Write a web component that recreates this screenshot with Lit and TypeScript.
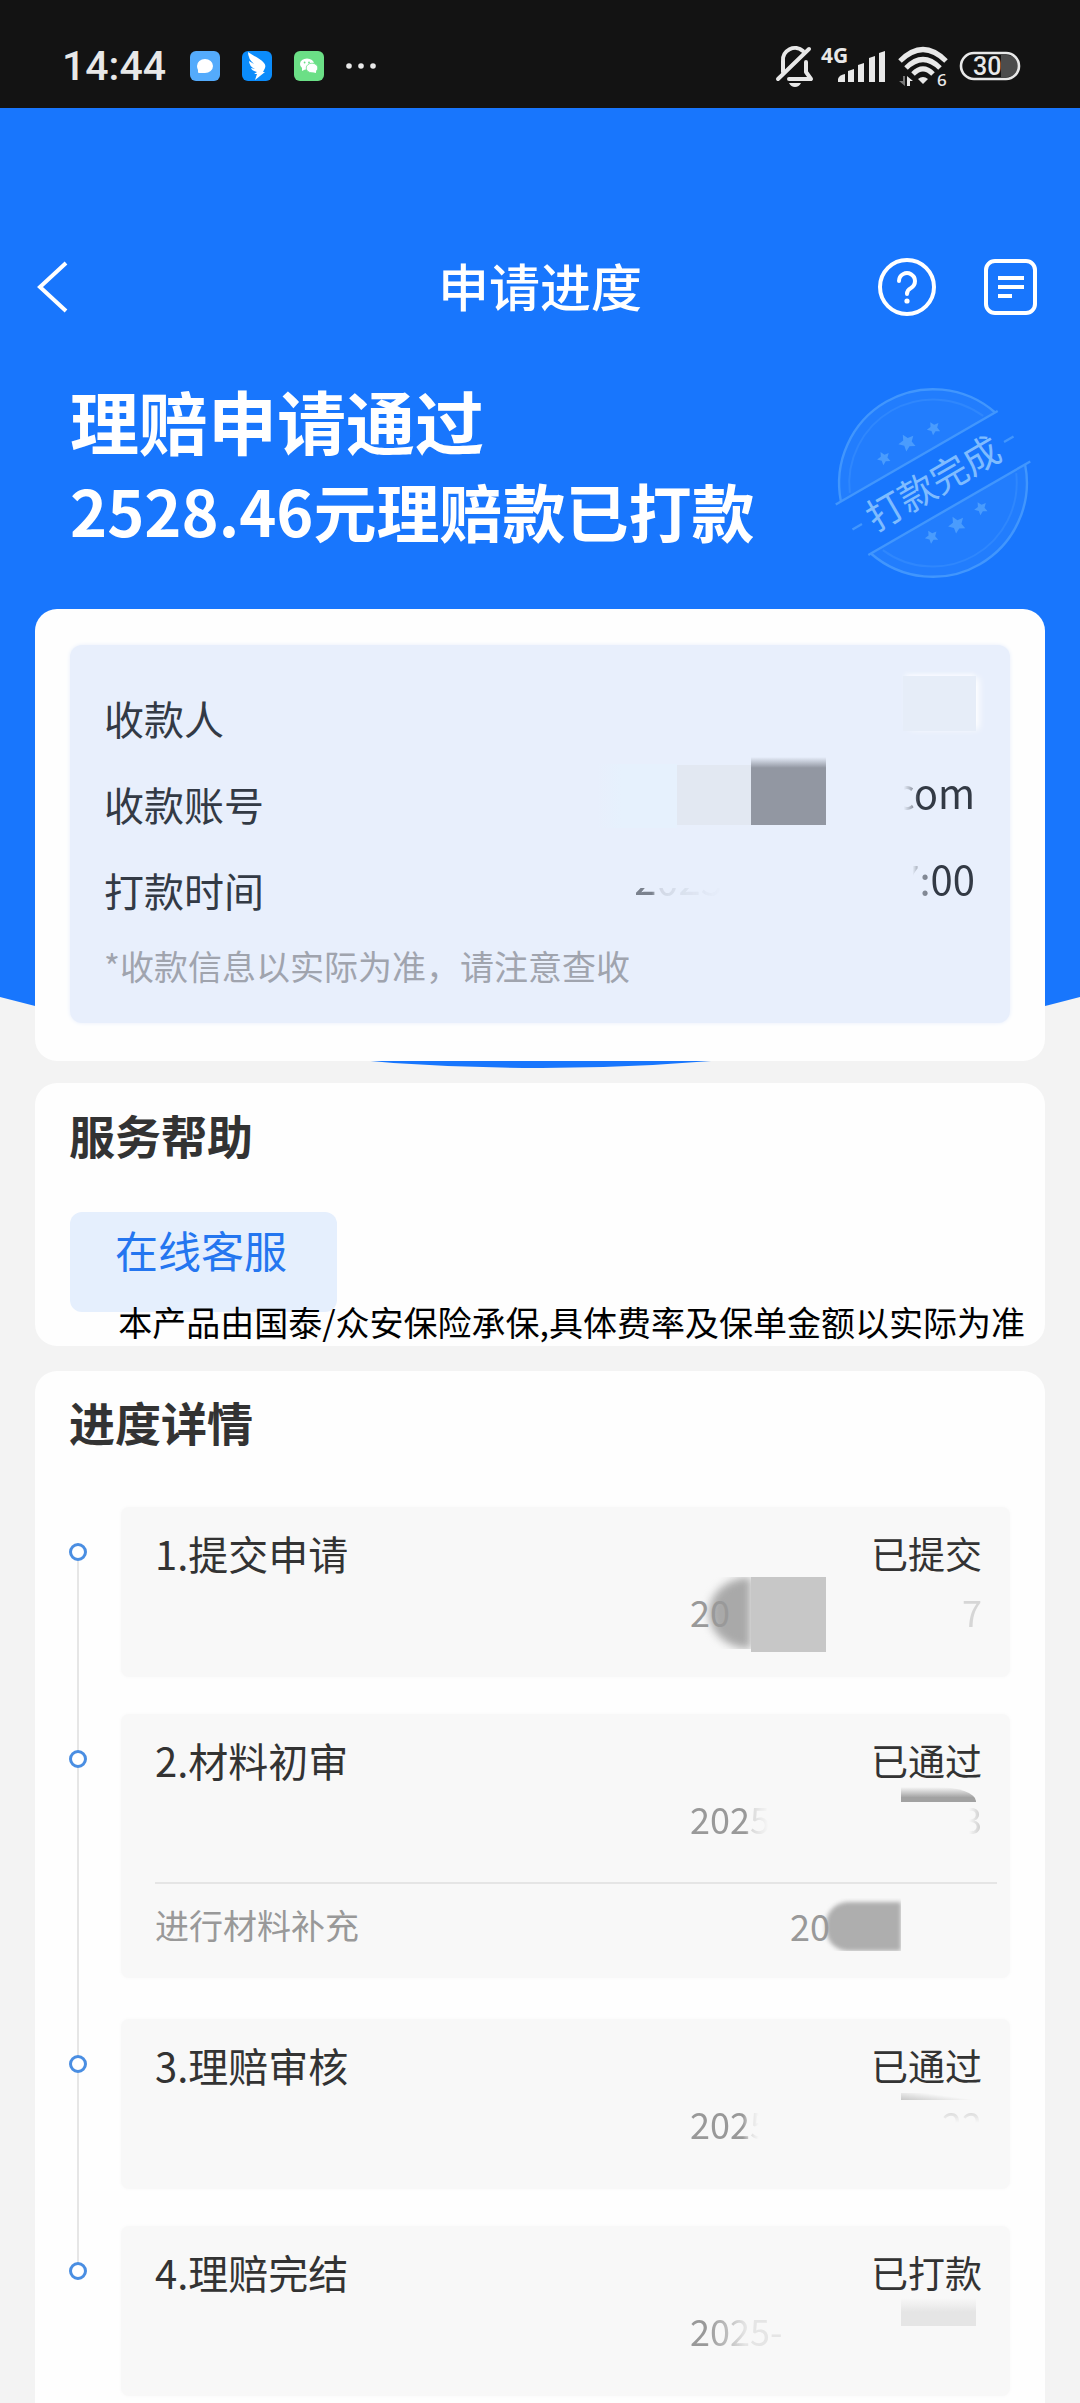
import { LitElement, html, css, svg, nothing } from "lit";
import { customElement, property } from "lit/decorators.js";

interface Step {
  title: string;
  status: string;
  head: string;
  headFade: string;
  tail: string;
  tailFade: string;
  covers: string[];
  extra?: { label: string; date: string; cover: string };
}

const STEPS: Step[] = [
  { title: "1.提交申请", status: "已提交", head: "20", headFade: "", tail: "7", tailFade: "ghost", covers: ["smear-round", "smear-flat"] },
  {
    title: "2.材料初审", status: "已通过", head: "2025", headFade: "fade-late", tail: "3", tailFade: "right-half", covers: ["strip-dark"],
    extra: { label: "进行材料补充", date: "20", cover: "smear-pill" },
  },
  { title: "3.理赔审核", status: "已通过", head: "2025", headFade: "fade-mid", tail: "22", tailFade: "top-part", covers: ["strip-thin"] },
  { title: "4.理赔完结", status: "已打款", head: "2025-", headFade: "fade-early", tail: "", tailFade: "", covers: ["strip-pale"] },
];

const star = (x: number, y: number, r: number) => {
  const pts: string[] = [];
  for (let i = 0; i < 10; i++) {
    const a = (Math.PI / 5) * i - Math.PI / 2;
    const q = i % 2 ? r * 0.5 : r;
    pts.push(`${(x + q * Math.cos(a)).toFixed(1)},${(y + q * Math.sin(a)).toFixed(1)}`);
  }
  return svg`<polygon points=${pts.join(" ")}></polygon>`;
};

@customElement("status-bar")
export class StatusBar extends LitElement {
  static styles = css`
    :host { display: block; }
    .bar {
      height: 108px; box-sizing: border-box; padding: 24px 59px 0 62px;
      display: flex; align-items: center; justify-content: space-between;
      background: #131313; color: #e8e8e8;
      font-family: Roboto, "Noto Sans CJK SC", sans-serif;
    }
    .side { display: flex; align-items: center; }
    .clock { font-size: 41px; font-weight: 500; line-height: 48px; margin-right: 24px; }
    .apps { display: flex; gap: 22px; margin-right: 20px; }
    .app { width: 30px; height: 30px; }
    .dots { width: 34px; height: 30px; }
    .bell { width: 40px; height: 44px; margin-right: 6px; }
    .cell { width: 66px; height: 44px; margin-right: 10px; }
    .wifi { width: 52px; height: 44px; margin-right: 10px; }
    .battery { width: 62px; height: 44px; }
    svg { display: block; overflow: visible; }
  `;
  render() {
    return html`
      <div class="bar">
        <div class="side">
          <span class="clock">14:44</span>
          <div class="apps">
            <svg class="app" viewBox="0 0 30 30" aria-hidden="true">
              <rect width="30" height="30" rx="6" fill="#54abfc"></rect>
              <path d="M7 15a8 7 0 1 1 8 7H9q-1 0-1-1v-2q-1-2-1-4z" fill="#fff"></path>
            </svg>
            <svg class="app" viewBox="0 0 30 30" aria-hidden="true">
              <rect width="30" height="30" rx="6" fill="#0b8cfb"></rect>
              <path d="M6 1C11 5 18 7 22 12q2 2 1 5l-2 4h2L13 29l2-6h-3l3-2q-5-1-6-4l4 1Q7 15 7 10l5 3Q6 8 6 1z" fill="#fff"></path>
            </svg>
            <svg class="app" viewBox="0 0 30 30" aria-hidden="true">
              <rect width="30" height="30" rx="6" fill="#6bdf86"></rect>
              <ellipse cx="13" cy="13" rx="7" ry="5.6" fill="#fff"></ellipse>
              <path d="M8 16l0 4 4-2z" fill="#fff"></path>
              <ellipse cx="18" cy="17" rx="5.8" ry="4.8" fill="#fff" stroke="#6bdf86" stroke-width="0.8"></ellipse>
              <path d="M22 19v3l-4-1z" fill="#fff"></path>
              <circle cx="10.6" cy="11.5" r="0.9" fill="#6bdf86"></circle>
              <circle cx="15" cy="11.5" r="0.9" fill="#6bdf86"></circle>
            </svg>
          </div>
          <svg class="dots" viewBox="0 0 34 30" aria-hidden="true" fill="#e8e8e8">
            <circle cx="5" cy="15" r="2.8"></circle><circle cx="17" cy="15" r="2.8"></circle><circle cx="29" cy="15" r="2.8"></circle>
          </svg>
        </div>
        <div class="side">
          <svg class="bell" viewBox="0 0 40 44" aria-hidden="true" fill="none" stroke="#e8e8e8" stroke-width="4" stroke-linecap="round" stroke-linejoin="round">
            <path d="M8 28V17a12 12 0 0 1 20-10"></path>
            <path d="M31 18v10l5 7H14"></path>
            <path d="M3 35L34 5"></path>
            <path d="M14 39h12q-2 4-6 4t-6-4z" fill="#e8e8e8" stroke="none"></path>
          </svg>
          <svg class="cell" viewBox="0 0 66 44" aria-hidden="true" fill="#e8e8e8">
            <text x="0" y="19" font-size="21" font-weight="700" font-family="Noto Sans, sans-serif">4G</text>
            <path d="M17 38v-3q1-4 7-5v8z"></path>
            <path d="M27 38V27l6-2v13z"></path><path d="M37 38V21l6-2v19z"></path>
            <path d="M48 38V14l6-2v26z"></path><path d="M58 38V9l6-2v31z"></path>
          </svg>
          <svg class="wifi" viewBox="0 0 52 44" aria-hidden="true">
            <g fill="none" stroke="#e8e8e8" stroke-width="5">
              <path d="M3 17Q26-6 49 17"></path><path d="M9 24Q26 7 43 24"></path><path d="M16 30Q26 20 36 30"></path>
            </g>
            <path d="M21 35q5-4 10 0l-5 5z" fill="#e8e8e8"></path>
            <path d="M8 32v10l-6-5h4v-5z" fill="#777"></path>
            <path d="M10 42V32l6 5h-3v5z" fill="#e8e8e8"></path>
            <text x="40" y="42" font-size="17" font-weight="500" fill="#e8e8e8" font-family="Noto Sans, sans-serif">6</text>
          </svg>
          <svg class="battery" viewBox="0 0 62 44" aria-hidden="true">
            <path d="M42 11h6a11 11 0 0 1 0 22h-6z" fill="#4c4c4c"></path>
            <rect x="2" y="9" width="58" height="26" rx="13" fill="none" stroke="#e8e8e8" stroke-width="2.6"></rect>
            <text x="14" y="31" font-size="25" font-weight="500" fill="#e8e8e8" font-family="Roboto, sans-serif">30</text>
          </svg>
        </div>
      </div>
    `;
  }
}

@customElement("progress-step")
export class ProgressStep extends LitElement {
  @property({ attribute: false }) step!: Step;
  @property({ type: Boolean }) first = false;
  @property({ type: Boolean }) last = false;

  static styles = css`
    :host { display: block; }
    .step { display: grid; grid-template-columns: 18px 1fr; column-gap: 34px; }
    .rail { display: flex; flex-direction: column; align-items: center; }
    .lead { width: 2px; height: 36px; background: #e6e6e6; }
    .dot { width: 18px; height: 18px; box-sizing: border-box; border: 3px solid #4a8ee2; border-radius: 50%; background: #fff; }
    .trail { width: 2px; flex: 1; background: #e6e6e6; }
    .clear { background: none; }
    .box { padding: 20px 0 40px; margin-bottom: 37px; background: #f8f8f8; border-radius: 8px; box-shadow: 0 0 4px #f9f9f9; }
    .box.tall { padding-bottom: 27px; margin-bottom: 41px; }
    .last .box { margin-bottom: 0; }
    .row { display: flex; justify-content: space-between; padding: 0 28px 0 34px; line-height: 52px; }
    .title { font-size: 40px; font-weight: 400; margin: 0; color: #333; }
    .status { font-size: 37px; color: #333; }
    .when { justify-content: flex-end; margin-top: 6px; }
    .date {
      position: relative; isolation: isolate; width: 292px; display: flex; justify-content: space-between;
      font-size: 36px; color: #999;
    }
    .short { width: 192px; }
    .rule { margin: 38px 13px 15px 34px; border: 0; border-top: 2px solid #e5e5e5; }
    .label { font-size: 34px; color: #999; }
    .ghost { opacity: 0.35; }
    .fade-late { mask-image: linear-gradient(90deg, #000 70%, #0005 76%, transparent 98%); }
    .fade-mid { mask-image: linear-gradient(90deg, #000 66%, #0004 76%, transparent 86%); }
    .fade-early { mask-image: linear-gradient(90deg, #000 18%, #0008 45%, #0003 60%, #0003 100%); }
    .right-half { opacity: 0.5; mask-image: linear-gradient(90deg, transparent 35%, #000); }
    .top-part { opacity: 0.3; mask-image: linear-gradient(180deg, #000 30%, transparent 50%); }
    .cover { position: absolute; z-index: -1; }
    .smear-round { right: 231px; top: -8px; width: 42px; height: 72px; background: #a9a9a9; border-radius: 42px 0 0 42px / 36px 0 0 36px; filter: blur(4px); clip-path: inset(0 0 0 -12px); }
    .smear-flat { right: 156px; top: -8px; width: 75px; height: 75px; background: #c7c7c7; }
    .strip-dark { right: 6px; top: -5px; width: 75px; height: 15px; background: linear-gradient(#f8f8f8, #a2a2a2 70%); border-top-right-radius: 40px 14px; }
    .strip-thin { right: 6px; top: -4px; width: 75px; height: 7px; background: linear-gradient(8deg, #c8c8c8, #f8f8f8 60%); }
    .strip-pale { right: 6px; top: -6px; width: 75px; height: 28px; background: linear-gradient(#f8f8f8, #e5e5e5 50%); }
    .smear-pill { right: 81px; top: 3px; width: 75px; height: 49px; background: #aeaeae; border-radius: 22px 0 0 22px; filter: blur(2px); clip-path: inset(-4px 0 0 -6px); }
  `;

  render() {
    const s = this.step;
    return html`
      <article class="step ${this.last ? "last" : ""}">
        <div class="rail">
          <span class="lead ${this.first ? "clear" : ""}"></span>
          <span class="dot"></span>
          <span class="trail ${this.last ? "clear" : ""}"></span>
        </div>
        <div class="box ${s.extra ? "tall" : ""}">
          <div class="row">
            <h3 class="title">${s.title}</h3>
            <span class="status">${s.status}</span>
          </div>
          <div class="row when">
            <div class="date">
              <span class=${s.headFade}>${s.head}</span>
              <span class=${s.tailFade}>${s.tail}</span>
              ${s.covers.map((c) => html`<i class="cover ${c}"></i>`)}
            </div>
          </div>
          ${s.extra
            ? html`
                <hr class="rule" />
                <div class="row">
                  <span class="label">${s.extra.label}</span>
                  <div class="date short"><span>${s.extra.date}</span><i class="cover ${s.extra.cover}"></i></div>
                </div>
              `
            : nothing}
        </div>
      </article>
    `;
  }
}

@customElement("app-root")
export class AppRoot extends LitElement {
  static styles = css`
    :host { display: block; font-family: "Noto Sans CJK SC", "Noto Sans", sans-serif; color: #333; }
    .page { min-height: 100vh; display: flex; flex-direction: column; background: #f3f3f3; }
    .hero { position: relative; isolation: isolate; }
    .backdrop { position: absolute; z-index: -1; top: 0; left: 0; width: 100%; height: 960px; display: block; }
    .nav { display: grid; grid-template-columns: 1fr auto 1fr; align-items: center; height: 104px; padding: 127px 36px 0; color: #fff; }
    .nav-title { margin: 0; padding-bottom: 4px; font-size: 51px; font-weight: 500; line-height: 72px; }
    .actions { display: flex; justify-content: flex-end; gap: 38px; }
    .icon { padding: 0; border: 0; background: none; color: inherit; width: 66px; height: 66px; cursor: pointer; }
    .icon svg { display: block; width: 66px; height: 66px; }
    .summary { display: flex; justify-content: space-between; align-items: flex-start; padding: 37px 47px 26px 70px; }
    .headline { margin: 0; font-weight: 700; color: #fff; line-height: 89px; white-space: nowrap; }
    .lead { display: block; font-size: 69px; }
    .amount { display: block; font-size: 63px; }
    .stamp { width: 200px; height: 200px; margin-top: 7px; flex: none; overflow: visible; }
    .card { margin: 0 35px; background: #fefefe; border-radius: 22px; }
    .payee { padding: 36px 35px 38px; }
    .panel { background: #e8effc; border-radius: 12px; padding: 29px 35px 31px 34px; box-shadow: 0 0 4px #e8effc; }
    .facts { margin: 0; }
    .fact { position: relative; display: flex; justify-content: space-between; font-size: 40px; height: 86px; color: #333a45; }
    .fact dt { line-height: 88px; }
    .fact dd { margin: 0; line-height: 64px; display: flex; justify-content: flex-end; }
    .cut-left { mask-image: linear-gradient(90deg, transparent 12%, #0006 22%, #000 30%); }
    .cut-time { mask-image: linear-gradient(90deg, transparent 20%, #0008 30%, #0009 42%, #000 44%); }
    .sliver { position: absolute; right: 252px; opacity: 0.6; mask-image: linear-gradient(90deg, #000 20%, #0003 28%, transparent); clip-path: inset(42px 0 0 0); }
    .cover { position: absolute; }
    .name-mask { right: -1px; top: 2px; width: 73px; height: 55px; background: #e6edf8; box-shadow: 5px 0 7px -2px #fff, 0 -4px 4px -2px #f6f9ff; }
    .acct-dark { right: 149px; top: -3px; width: 75px; height: 68px; background: linear-gradient(#e8effc, #9297a2 16%); }
    .acct-light { right: 224px; top: 5px; width: 74px; height: 60px; background: #e2e8f2; }
    .acct-pale { right: 298px; top: 4px; width: 80px; height: 64px; background: linear-gradient(90deg, #e8effc, #e6f1fd 30%); }
    .note { margin: 8px 0 0; font-size: 34px; line-height: 52px; color: #a0a4ae; }
    .help { margin-top: 22px; padding: 21px 0 2px; }
    .section-title { margin: 0; padding: 0 34px; font-size: 46px; line-height: 60px; font-weight: 700; color: #333; }
    .service {
      display: block; margin: 48px 0 0 35px; padding: 0 50px 26px 45px; border: 0; border-radius: 12px;
      background: #e5effd; color: #2476f0; font: inherit; font-size: 43px; line-height: 74px; cursor: pointer;
    }
    .disclaimer { position: relative; margin: -12px 20px 0 0; padding: 0; text-align: right; font-size: 34px; line-height: 44px; color: #000; white-space: nowrap; }
    .detail { margin-top: 25px; padding: 20px 0 6px; flex: 1; border-radius: 22px 22px 0 0; }
    .steps { list-style: none; margin: 56px 0 0; padding: 0 35px 0 34px; }
  `;

  render() {
    return html`
      <div class="page">
        <status-bar></status-bar>
        <header class="hero">
          <svg class="backdrop" viewBox="0 0 1080 960" preserveAspectRatio="none" aria-hidden="true">
            <path d="M0 0H1080V889A2089 2089 0 0 1 0 889Z" fill="#1876fd"></path>
          </svg>
          <nav class="nav">
            <button class="icon" aria-label="返回">
              <svg viewBox="0 0 66 66" fill="none" stroke="#fff" stroke-width="4"><path d="M30 9L4 33L30 57"></path></svg>
            </button>
            <h1 class="nav-title">申请进度</h1>
            <div class="actions">
              <button class="icon" aria-label="帮助">
                <svg viewBox="0 0 66 66" fill="none" stroke="#fff" stroke-width="4">
                  <circle cx="33" cy="33" r="27"></circle>
                  <path d="M25 27a8 8 0 1 1 12 7q-4 2-4 6" stroke-linecap="round"></path>
                  <circle cx="33" cy="47" r="2.6" fill="#fff" stroke="none"></circle>
                </svg>
              </button>
              <button class="icon" aria-label="记录">
                <svg viewBox="0 0 66 66" fill="none" stroke="#fff" stroke-width="4">
                  <rect x="8" y="7" width="49" height="52" rx="9"></rect>
                  <path d="M20 24h26M20 33h26M20 42h14"></path>
                </svg>
              </button>
            </div>
          </nav>
          <div class="summary">
            <h2 class="headline"><span class="lead">理赔申请通过</span><span class="amount">2528.46元理赔款已打款</span></h2>
            <svg class="stamp" viewBox="0 0 200 200">
              <g transform="translate(100 100) rotate(-30)">
                <g fill="#2b83fd" fill-opacity="0.5" stroke="#4196fd" stroke-width="2.4">
                  <path d="M-89-30A94 94 0 0 1 89-30"></path>
                  <path d="M89 30A94 94 0 0 1-89 30"></path>
                  <path d="M-95-30H92M-92 30H95"></path>
                </g>
                <g fill="none" stroke="#2f87fd" stroke-width="2">
                  <path d="M-77-33A84 84 0 0 1 77-33"></path><path d="M77 33A84 84 0 0 1-77 33"></path>
                </g>
                <g fill="#4a9cfd">${star(-30, -46, 7)}${star(-2, -48, 9)}${star(28, -47, 7)}${star(-28, 46, 7)}${star(0, 48, 9)}${star(29, 46, 7)}</g>
                <path d="M-93 0h11M82 0h11" stroke="#4196fd" stroke-width="2.4"></path>
                <text x="0" y="14" text-anchor="middle" font-size="37" fill="#7fbcff" font-family="Noto Sans CJK SC, sans-serif">打款完成</text>
              </g>
            </svg>
          </div>
          <section class="card payee">
            <div class="panel">
              <dl class="facts">
                <div class="fact"><dt>收款人</dt><dd><i class="cover name-mask"></i></dd></div>
                <div class="fact">
                  <dt>收款账号</dt>
                  <dd><i class="cover acct-pale"></i><i class="cover acct-light"></i><i class="cover acct-dark"></i><span class="cut-left">com</span></dd>
                </div>
                <div class="fact"><dt>打款时间</dt><dd><span class="sliver">2025</span><span class="cut-time">7:00</span></dd></div>
              </dl>
              <p class="note">*收款信息以实际为准，请注意查收</p>
            </div>
          </section>
        </header>
        <section class="card help">
          <h2 class="section-title">服务帮助</h2>
          <button class="service">在线客服</button>
          <p class="disclaimer">本产品由国泰/众安保险承保,具体费率及保单金额以实际为准</p>
        </section>
        <section class="card detail">
          <h2 class="section-title">进度详情</h2>
          <ol class="steps">
            ${STEPS.map(
              (s, i) => html`<li><progress-step .step=${s} ?first=${i === 0} ?last=${i === STEPS.length - 1}></progress-step></li>`
            )}
          </ol>
        </section>
      </div>
    `;
  }
}
